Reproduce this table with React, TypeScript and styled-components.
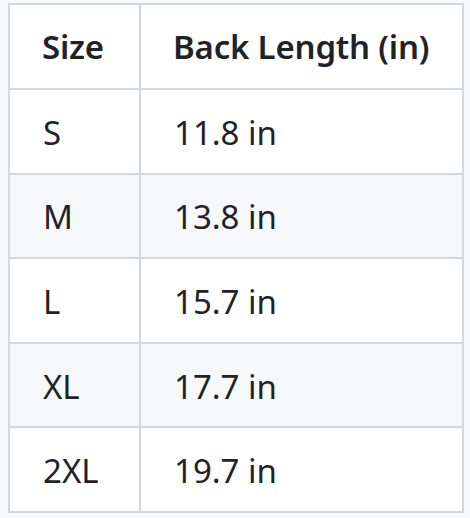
import React from "react";
import styled, { createGlobalStyle } from "styled-components";

const Global = createGlobalStyle`
  html, body { margin: 0; padding: 0; background: #f6f8fa; }
  body { font-family: "Noto Sans", "Open Sans", sans-serif; color: #1f2328; }
`;

const Page = styled.div`
  padding: 3px 0 0 8px;
  width: 470px;
  height: 518px;
  box-sizing: border-box;
`;

const Table = styled.table`
  border-collapse: collapse;
  border-spacing: 0;
  width: 456px;
  table-layout: fixed;
  background: #ffffff;
`;

const HeadCell = styled.th<{ $w?: number }>`
  border: 2px solid #d1d9e0;
  height: 85px;
  box-sizing: border-box;
  padding: 0 0 0 32px;
  text-align: left;
  font-weight: 600;
  font-size: 33px;
  letter-spacing: -0.2px;
  width: ${(p) => (p.$w ? `${p.$w}px` : "auto")};
`;

const Row = styled.tr<{ $alt: boolean }>`
  background: ${(p) => (p.$alt ? "#f6f8fa" : "#ffffff")};
`;

const Cell = styled.td`
  border: 2px solid #d1d9e0;
  height: 84.6px;
  box-sizing: border-box;
  padding: 2px 0 0 33px;
  font-size: 33px;
  font-weight: 400;
`;

const rows = [
  ["S", "11.8 in"],
  ["M", "13.8 in"],
  ["L", "15.7 in"],
  ["XL", "17.7 in"],
  ["2XL", "19.7 in"],
];

export default function App() {
  return (
    <Page>
      <Global />
      <Table>
        <thead>
          <tr>
            <HeadCell $w={131}>Size</HeadCell>
            <HeadCell>Back Length (in)</HeadCell>
          </tr>
        </thead>
        <tbody>
          {rows.map(([s, v], i) => (
            <Row key={s} $alt={i % 2 === 1}>
              <Cell>{s}</Cell>
              <Cell>{v}</Cell>
            </Row>
          ))}
        </tbody>
      </Table>
    </Page>
  );
}
